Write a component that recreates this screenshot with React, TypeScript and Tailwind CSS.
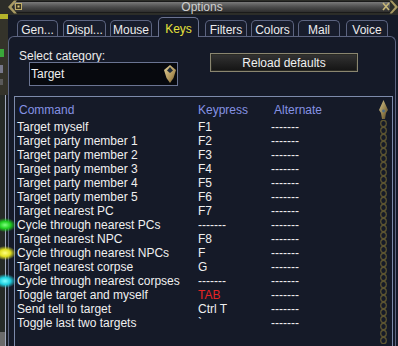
import React from "react";

const FONT = { fontFamily: '"Liberation Sans", Arial, sans-serif' };

const tabs = [
  { label: "Gen...", cls: "ml-[9px] w-[41px]" },
  { label: "Displ...", cls: "ml-[5px] w-[43px]" },
  { label: "Mouse", cls: "ml-[4px] w-[42px]" },
  { label: "Keys", cls: "ml-[6px] w-[41px]", active: true },
  { label: "Filters", cls: "ml-[6px] w-[42px]" },
  { label: "Colors", cls: "ml-[4px] w-[43px]" },
  { label: "Mail", cls: "ml-[4px] w-[42px]" },
  { label: "Voice", cls: "ml-[6px] w-[42px]" },
];

const NONE = "-------";

const rows: { cmd: string; key: string; red?: boolean }[] = [
  { cmd: "Target myself", key: "F1" },
  { cmd: "Target party member 1", key: "F2" },
  { cmd: "Target party member 2", key: "F3" },
  { cmd: "Target party member 3", key: "F4" },
  { cmd: "Target party member 4", key: "F5" },
  { cmd: "Target party member 5", key: "F6" },
  { cmd: "Target nearest PC", key: "F7" },
  { cmd: "Cycle through nearest PCs", key: NONE },
  { cmd: "Target nearest NPC", key: "F8" },
  { cmd: "Cycle through nearest NPCs", key: "F" },
  { cmd: "Target nearest corpse", key: "G" },
  { cmd: "Cycle through nearest corpses", key: NONE },
  { cmd: "Toggle target and myself", key: "TAB", red: true },
  { cmd: "Send tell to target", key: "Ctrl T" },
  { cmd: "Toggle last two targets", key: "`" },
];

function DropArrow() {
  return (
    <svg width="12" height="18" viewBox="0 0 12 18">
      <defs>
        <linearGradient id="gold" x1="0" y1="0" x2="1" y2="1">
          <stop offset="0" stopColor="#e4d29a" />
          <stop offset="0.6" stopColor="#b0955a" />
          <stop offset="1" stopColor="#6a5428" />
        </linearGradient>
      </defs>
      <path d="M6 0 L12 5 L9.5 13 L6 18 L2.5 13 L0 5 Z" fill="url(#gold)" />
      <path d="M6 2 L9 5.5 L6 8 L3 5.5 Z" fill="#1d2a3a" />
    </svg>
  );
}

function ScrollBar() {
  return (
    <div className="flex w-[9px] flex-col items-center">
      <svg width="9" height="19" viewBox="0 0 9 19" className="mt-[3px] shrink-0">
        <defs>
          <linearGradient id="sgold" x1="0" y1="0" x2="1" y2="1">
            <stop offset="0" stopColor="#d8c890" />
            <stop offset="0.6" stopColor="#8e7a48" />
            <stop offset="1" stopColor="#4e4224" />
          </linearGradient>
        </defs>
        <path d="M4.5 0 L9 10 L7 13 L6 19 L3 19 L2 13 L0 10 Z" fill="url(#sgold)" />
        <circle cx="4.5" cy="11" r="1.4" fill="#4a6a88" />
      </svg>
      <svg width="9" height="224" viewBox="0 0 9 224" className="mt-[1px] shrink-0">
        <defs>
          <pattern id="chain" width="9" height="7" patternUnits="userSpaceOnUse">
            <ellipse cx="4.5" cy="3.5" rx="2.8" ry="3.2" fill="none" stroke="#5c5430" strokeWidth="1.3" />
          </pattern>
        </defs>
        <rect width="9" height="224" fill="url(#chain)" />
      </svg>
    </div>
  );
}

function GameStrip() {
  return (
    <div className="flex w-[8px] shrink-0 flex-col">
      <div className="h-[14px] shrink-0 bg-[#2c2d28]" />
      <div className="h-[5px] shrink-0 bg-[#b4b42a]" />
      <div className="h-[76px] shrink-0 bg-[#34332a]">
        <div className="mt-[30px] h-[8px] w-[4px] bg-[#3aa83a]" />
        <div className="mt-[8px] h-[8px] w-[3px] bg-[#77788a]" />
        <div className="mt-[6px] h-[6px] w-[3px] bg-[#5a5a5a]" />
      </div>
      <div className="flex flex-1">
        <div className="flex w-[5px] flex-col bg-[#262a27]">
          <div className="flex-1" />
          <div className="h-[14px] bg-[#6a6a6a]" />
        </div>
        <div className="w-[1px] bg-[#a0a8bc]" />
        <div className="w-[2px] bg-[#191c24]" />
      </div>
    </div>
  );
}

function Dot({ cls }: { cls: string }) {
  return <div className={`pointer-events-none absolute left-[-6px] h-[14px] w-[22px] rounded-full ${cls}`} />;
}

export default function App() {
  return (
    <div className="relative flex h-[346px] w-[398px] overflow-hidden bg-[#1c1f24]" style={FONT}>
      <GameStrip />

      <div className="flex min-h-0 flex-1 flex-col">
        {/* title bar */}
        <div className="relative h-[15px] shrink-0 bg-[#2c2d28]">
          <div className="absolute left-[6px] right-[8px] top-[1px] flex h-[12px] items-center justify-center border-y border-[#1a1a1a] bg-gradient-to-b from-[#7a7a7a] via-[#4c4c4c] to-[#2e2e2e]">
            <span className="text-[12px] leading-none text-[#cfcfcf]">Options</span>
          </div>
          <svg width="14" height="14" viewBox="0 0 14 14" className="absolute left-0 top-0">
            <path d="M0 7 L6 0.5 L9 0.5 L3.5 7 L9 13.5 L6 13.5 Z" fill="#a89a62" />
            <rect x="7.5" y="3.5" width="6" height="6" fill="#3a3520" stroke="#c0ae6a" />
            <rect x="9.5" y="5.5" width="2" height="2" fill="#d8c880" />
          </svg>
          <svg width="16" height="14" viewBox="0 0 16 14" className="absolute right-0 top-0">
            <path d="M1 3 L7 10 M7 3 L1 10" stroke="#c8b878" strokeWidth="1.6" />
            <path d="M16 7 L10 0.5 L7.5 0.5 L13 7 L7.5 13.5 L10 13.5 Z" fill="#a89a62" />
          </svg>
        </div>

        {/* window body */}
        <div className="flex min-h-0 flex-1 flex-col bg-[#151a28]">
          <div className="flex h-[21px] shrink-0 items-end">
            {tabs.map((t) =>
              t.active ? (
                <div
                  key={t.label}
                  className={`${t.cls} relative z-10 -mb-px flex h-[20px] items-end justify-center rounded-t-[5px] border border-b-0 border-[#6a7290] bg-[#151a28] pb-[2px] text-[12px] leading-[12px] text-[#e8e23c]`}
                >
                  {t.label}
                </div>
              ) : (
                <div
                  key={t.label}
                  className={`${t.cls} flex h-[16px] items-end justify-center rounded-t-[5px] border border-b-0 border-[#5c6480] bg-[#181d2c] text-[12px] leading-[12px] text-[#ececec]`}
                >
                  {t.label}
                </div>
              )
            )}
          </div>

          <div className="mr-[2px] flex min-h-0 flex-1 flex-col rounded-t-[6px] border border-b-0 border-[#5c6480]">
            {/* top controls */}
            <div className="flex h-[59px] shrink-0">
              <div className="ml-[10px] flex flex-col pt-[12px]">
                <div className="h-[14px] text-[12px] leading-[14px] text-[#ececec]">Select category:</div>
                <div className="ml-[10px] -mt-px flex h-[24px] w-[149px] items-center justify-between border border-[#6a7492] bg-[#07090e] pl-[1px] pr-[1px]">
                  <span className="text-[12px] leading-none text-[#f0f0f0]">Target</span>
                  <DropArrow />
                </div>
              </div>
              <div className="ml-[32px] mt-[16px] flex h-[19px] w-[148px] items-center justify-center border border-[#8a8670] bg-gradient-to-b from-[#343434] to-[#141414] text-[12px] leading-none text-[#f0f0f0] shadow-[inset_0_0_0_1px_#2a2a24]">
                Reload defaults
              </div>
            </div>

            {/* key list */}
            <div className="ml-[5px] mr-[2px] flex min-h-0 flex-1 overflow-hidden border border-b-0 border-[#7d8bab]">
              <div className="flex flex-1 flex-col">
                <div className="mt-[6px] flex h-[14px] shrink-0 pl-[4px] text-[12px] leading-[14px] text-[#8592e4]">
                  <div className="w-[179px]">Command</div>
                  <div className="w-[76px]">Keypress</div>
                  <div>Alternate</div>
                </div>
                <div className="mt-[3px] flex flex-col">
                  {rows.map((r) => (
                    <div key={r.cmd} className="flex h-[14px] shrink-0 pl-[2px] text-[12px] leading-[14px] text-[#f0f0f0]">
                      <div className="w-[181px]">{r.cmd}</div>
                      <div className={`w-[73px] ${r.red ? "text-[#e42424]" : ""}`}>{r.key}</div>
                      <div>{NONE}</div>
                    </div>
                  ))}
                </div>
              </div>
              <div className="mr-[4px]">
                <ScrollBar />
              </div>
            </div>
          </div>
        </div>
      </div>

      <Dot cls="top-[218px] bg-[radial-gradient(closest-side,#80ff80,#20d020_50%,transparent)]" />
      <Dot cls="top-[246px] bg-[radial-gradient(closest-side,#ffff80,#e0e020_50%,transparent)]" />
      <Dot cls="top-[274px] bg-[radial-gradient(closest-side,#80ffff,#20d0e0_50%,transparent)]" />
    </div>
  );
}
